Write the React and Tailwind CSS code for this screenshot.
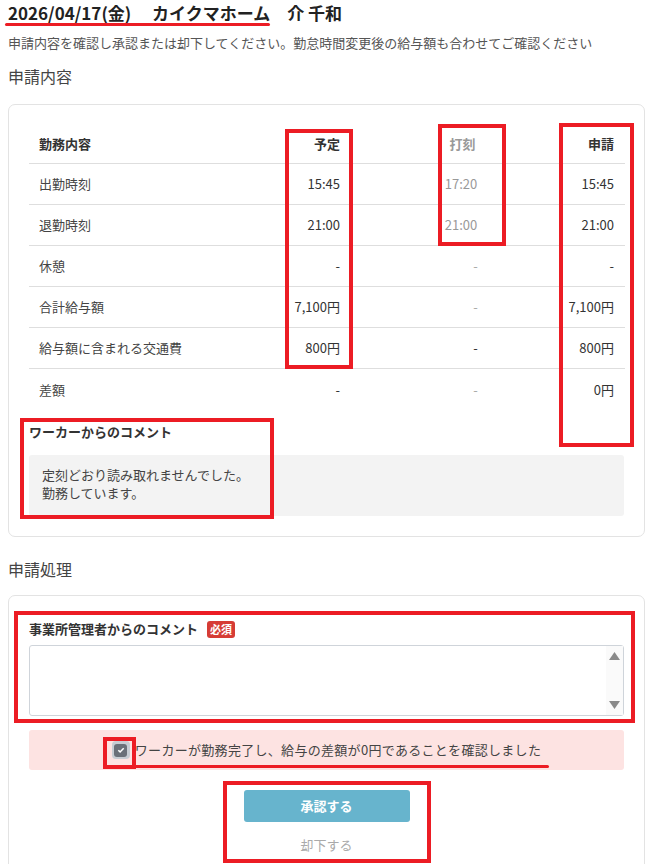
import React from "react";

const F = { fontFamily: '"Noto Sans CJK JP", "Noto Sans", sans-serif' };

function Box({ cls }) {
  return <div className={`absolute border-[4px] border-[#ec1c24] pointer-events-none ${cls}`} />;
}

const rows = [
  ["出勤時刻", "15:45", "17:20", "15:45", true],
  ["退勤時刻", "21:00", "21:00", "21:00", true],
  ["休憩", "-", "-", "-", false],
  ["合計給与額", "7,100円", "-", "7,100円", false],
  ["給与額に含まれる交通費", "800円", "-", "800円", false, true],
  ["差額", "-", "-", "0円", false],
];

export default function App() {
  return (
    <div style={F} className="relative w-[653px] h-[864px] overflow-hidden bg-white text-[#333]">
      <div className="px-2">
        <h1 className="pt-[2px] text-[17px] leading-[22px] font-bold text-[#222] whitespace-pre">2026/04/17(金)　 カイクマホーム　介 千和</h1>
        <p className="mt-[10px] text-[13px] leading-[18px] text-[#555]">申請内容を確認し承認または却下してください。勤怠時間変更後の給与額も合わせてご確認ください</p>
        <h2 className="mt-[13px] text-[16px] leading-[22px] text-[#444]">申請内容</h2>

        <div className="mt-[17px] border border-[#e3e3e3] rounded-[7px] px-5 pt-[19px] pb-5">
          <div className="grid grid-cols-[200px_121px_225px_50px] text-[13px]">
            <div className="h-10 flex items-center pl-[10px] font-bold border-b border-[#dedede]">勤務内容</div>
            <div className="h-10 flex items-center justify-end pr-[10px] font-bold border-b border-[#dedede]">予定</div>
            <div className="h-10 flex items-center justify-center font-bold text-[#999] border-b border-[#dedede]">打刻</div>
            <div className="h-10 flex items-center justify-end pr-[11px] font-bold border-b border-[#dedede] whitespace-nowrap">申請</div>
            {rows.map((r, i) => {
              const last = i === rows.length - 1;
              const b = last ? "" : "border-b border-[#dedede]";
              return (
                <React.Fragment key={i}>
                  <div className={`h-[41px] flex items-center pl-[10px] whitespace-nowrap text-[#444] ${b}`}>{r[0]}</div>
                  <div className={`h-[41px] flex items-center justify-end pr-[10px] whitespace-nowrap text-[#333] ${b}`}>{r[1]}</div>
                  <div className={`h-[41px] flex items-center justify-center whitespace-nowrap ${r[4] ? "text-[#999] pr-[3px]" : r[5] ? "text-[#333] pl-[26px]" : "text-[#aaa] pl-[26px]"} ${b}`}>{r[2]}</div>
                  <div className={`h-[41px] flex items-center justify-end pr-[11px] whitespace-nowrap text-[#333] ${b}`}>{r[3]}</div>
                </React.Fragment>
              );
            })}
          </div>
          <div className="mt-[12px] text-[13px] font-bold text-[#333] leading-[20px]">ワーカーからのコメント</div>
          <div className="mt-[13px] bg-[#f3f3f3] rounded-[3px] px-[13px] pt-[11px] pb-[14px] text-[13px] leading-[18px] text-[#444]">
            <div>定刻どおり読み取れませんでした。</div>
            <div>勤務しています。</div>
          </div>
        </div>

        <h2 className="mt-[21px] text-[16px] leading-[22px] text-[#444]">申請処理</h2>

        <div className="mt-[15px] border border-[#e3e3e3] rounded-[7px] px-5 pt-[22px] pb-8">
          <div className="flex items-center gap-[9px] h-[22px]">
            <span className="text-[13px] font-bold text-[#333]">事業所管理者からのコメント</span>
            <span className="bg-[#d63c35] text-white text-[11px] font-bold leading-[17px] h-[17px] px-[3px] rounded-[3px]">必須</span>
          </div>
          <div className="mt-[5px] h-[71px] border border-[#cfd4da] rounded-[3px] flex">
            <div className="flex-1" />
            <div className="w-[17px] bg-[#fafafa] flex flex-col justify-between items-center py-[6px]">
              <svg width="11" height="8" viewBox="0 0 11 8"><path d="M5.5 0L11 8H0z" fill="#8a8a8a" /></svg>
              <svg width="11" height="8" viewBox="0 0 11 8"><path d="M0 0h11L5.5 8z" fill="#8a8a8a" /></svg>
            </div>
          </div>
          <div className="mt-[14px] h-10 bg-[#fde3e2] rounded-[3px] flex items-center justify-center gap-[5px]">
            <span className="w-[18px] h-[18px] rounded-[4px] bg-[#c7ccd3] flex items-center justify-center">
              <span className="w-[13px] h-[13px] rounded-[3px] bg-[#6b7079] flex items-center justify-center">
                <svg width="8" height="8" viewBox="0 0 8 8"><path d="M1.3 4.2l1.8 1.7L6.7 2.2" stroke="white" strokeWidth="1.5" fill="none" /></svg>
              </span>
            </span>
            <span className="text-[13px] tracking-[0.3px] text-[#444]">ワーカーが勤務完了し、給与の差額が0円であることを確認しました</span>
          </div>
          <div className="mt-[20px] flex flex-col items-center">
            <div className="w-[166px] h-[32px] rounded-[3px] bg-[#67b4cd] text-white text-[13px] font-bold flex items-center justify-center">承認する</div>
            <div className="mt-[13px] text-[13px] text-[#aaa]">却下する</div>
          </div>
        </div>
      </div>

      {/* annotations */}
      <div className="absolute left-[5px] top-[23px] w-[265px] h-[3px] rounded-full bg-[#ec1c24]" />
      <Box cls="left-[285px] top-[129px] w-[68px] h-[240px]" />
      <Box cls="left-[438px] top-[124px] w-[68px] h-[122px]" />
      <Box cls="left-[559px] top-[123px] w-[75px] h-[324px]" />
      <Box cls="left-[20px] top-[418px] w-[254px] h-[101px]" />
      <Box cls="left-[14px] top-[611px] w-[621px] h-[112px]" />
      <Box cls="left-[103px] top-[737px] w-[33px] h-[32px]" />
      <div className="absolute left-[132px] top-[765px] w-[417px] h-[3px] rounded-full bg-[#ec1c24]" />
      <Box cls="left-[223px] top-[781px] w-[208px] h-[82px]" />
    </div>
  );
}
